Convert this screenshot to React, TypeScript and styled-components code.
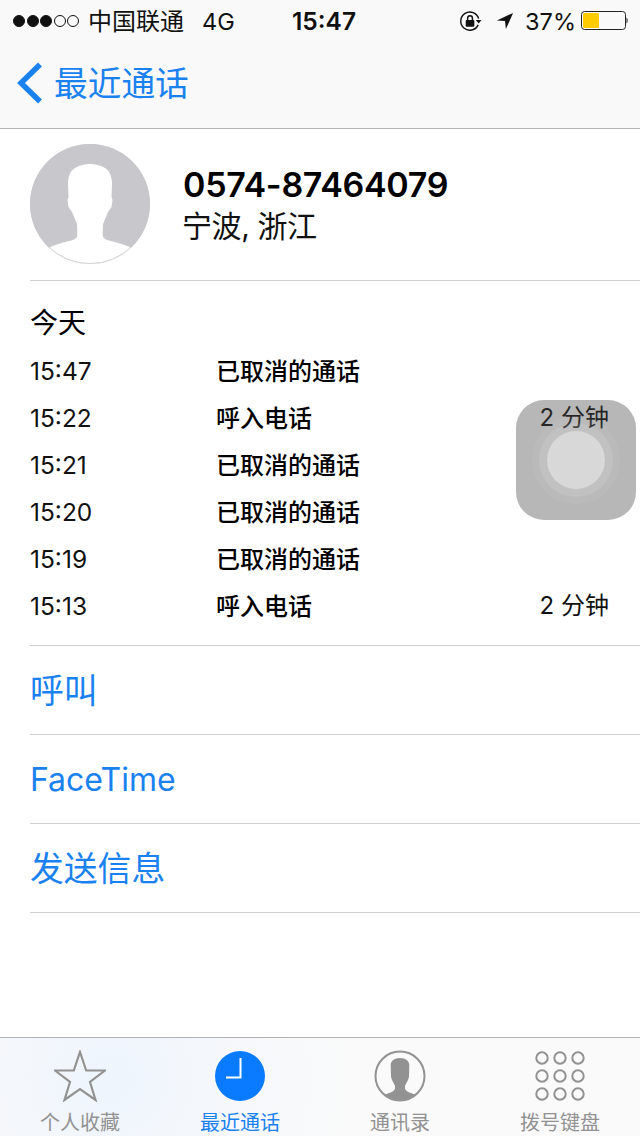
import React from "react";
import styled, { createGlobalStyle } from "styled-components";

const Global = createGlobalStyle`
  html, body { margin: 0; padding: 0; background: #fff; }
  body { font-family: Inter, "Noto Sans CJK SC", sans-serif; }
  * { box-sizing: border-box; }
`;
const Page = styled.div`
  position: relative; width: 640px; height: 1136px; overflow: hidden; display: flex; flex-direction: column; background: #fff; color: #000;
`;
const TopBar = styled.header`
  height: 129px; flex: none; background: #f9f9f9; border-bottom: 1px solid #b2b2b2; display: flex; flex-direction: column;
`;
const StatusBar = styled.div`
  height: 42px; flex: none; position: relative; display: flex; align-items: center; justify-content: space-between; padding: 0 12px 0 13px; font-size: 24px; color: #111;
`;
const StatusLeft = styled.div`display: flex; align-items: center; height: 100%;`;
const Dots = styled.div`display: flex; gap: 1.5px; margin-right: 9px;`;
const Dot = styled.span<{ $on: boolean }>`
  width: 12px; height: 12px; border-radius: 50%; border: 1px solid #111; background: ${p => (p.$on ? "#111" : "transparent")};
`;
const Carrier = styled.span`font-size: 24px; margin-right: 18px; padding-bottom: 3px;`;
const Net = styled.span`font-size: 23.5px;`;
const Clock = styled.span`
  position: absolute; left: 292px; top: 6px; font-size: 24.5px; font-weight: 600; line-height: 30px;
`;
const StatusRight = styled.div`display: flex; align-items: center;`;
const Percent = styled.span`font-size: 23.5px; margin: 0 5px 0 11px;`;
const NavBar = styled.nav`
  flex: 1; display: flex; align-items: center; padding: 0 0 7px 16px; color: #1a82f0; gap: 11px; font-size: 33.7px;
`;
const NavChevron = styled.svg`width: 27px; height: 42px; flex: none; margin-top: 3px;`;
const Profile = styled.section`
  height: 152px; flex: none; margin-left: 30px; border-bottom: 1px solid #cfcfd2; display: flex; align-items: center; padding-bottom: 15px; gap: 33px;
`;
const Avatar = styled.svg`width: 120px; height: 120px; flex: none; margin-top: 14px;`;
const ProfileText = styled.div`display: flex; flex-direction: column; margin-top: 16px;`;
const Phone = styled.div`font-size: 34px; line-height: 42px; font-weight: 600; letter-spacing: -0.3px;`;
const Region = styled.div`font-size: 30px; line-height: 40px; color: #111; letter-spacing: -0.4px; margin-left: -1px;`;
const History = styled.section`
  margin-left: 30px; border-bottom: 1px solid #cfcfd2; height: 365px; flex: none; padding: 22px 31px 0 0;
`;
const DayTitle = styled.div`font-size: 28px; line-height: 40px; margin-bottom: 5px;`;
const Row = styled.div`
  display: grid; grid-template-columns: 187px 1fr auto; height: 47px; align-items: center; font-size: 24px;
`;
const Time = styled.span`font-size: 24.5px; color: #111; padding-bottom: 2px;`;
const Kind = styled.span`font-weight: 500; color: #000; padding-bottom: 5px; margin-left: -1px;`;
const Duration = styled.span`color: #111; padding-bottom: 6px;`;
const Action = styled.div<{ $cjk?: boolean }>`
  margin-left: 30px; height: 89px; flex: none; border-bottom: 1px solid #cfcfd2; display: flex; align-items: center; color: #1a82f0;
  font-size: ${p => (p.$cjk ? "33.8px" : "32px")};
  padding-bottom: ${p => (p.$cjk ? "3px" : "0")};
`;
const Spacer = styled.div`flex: 1;`;
const TabBar = styled.footer`
  height: 99px; flex: none; border-top: 1px solid #b2b2b2; display: grid; grid-template-columns: repeat(4, 1fr);
  background: radial-gradient(circle at 110px 40px, #eef5fd 0, #f6f8fb 130px, #fafafa 260px);
`;
const Tab = styled.div<{ $active?: boolean }>`
  position: relative; display: flex; flex-direction: column; align-items: center; padding-top: 12px; color: ${p => (p.$active ? "#1a82f0" : "#929292")}; font-size: 20px;
`;
const TabIcon = styled.svg`width: 52px; height: 52px; flex: none;`;
const TabLabel = styled.span`line-height: 26px; margin-top: 8px; white-space: nowrap;`;
const Assistive = styled.div`
  position: absolute; left: 516px; top: 400px; width: 120px; height: 120px; border-radius: 28px; background: rgba(70,70,70,0.39);
  display: flex; align-items: center; justify-content: center;
`;
const RingOuter = styled.div`
  width: 88px; height: 88px; border-radius: 50%; background: rgba(255,255,255,0.05); display: flex; align-items: center; justify-content: center;
`;
const RingMid = styled.div`
  width: 74px; height: 74px; border-radius: 50%; background: rgba(255,255,255,0.1); display: flex; align-items: center; justify-content: center;
`;
const RingInner = styled.div`
  width: 58px; height: 58px; border-radius: 50%; background: #d8d8d8;
`;

const rows = [
  ["15:47", "已取消的通话", ""],
  ["15:22", "呼入电话", "2 分钟"],
  ["15:21", "已取消的通话", ""],
  ["15:20", "已取消的通话", ""],
  ["15:19", "已取消的通话", ""],
  ["15:13", "呼入电话", "2 分钟"],
];

const personPath =
  "M60 20 C55 20 50 21 45 24 C40 27 38 33 38 40 L38.5 53 L37.5 56 L38.5 63 L42 68 L44.5 74 L47 80 L47.3 91 C47 94 45 95 43 96 C35 98 27 100 18 104 L18 122 L102 122 L102 104 C93 100 85 98 77 96 C75 95 73 94 72.7 91 L73 80 L75.5 74 L78 68 L81.5 63 L82.5 56 L81.5 53 L82 40 C82 33 80 27 75 24 C70 21 65 20 60 20 Z";

export default function App() {
  return (
    <Page>
      <Global />
      <TopBar>
        <StatusBar>
          <StatusLeft>
            <Dots>
              {[1, 1, 1, 0, 0].map((d, i) => <Dot key={i} $on={!!d} />)}
            </Dots>
            <Carrier>中国联通</Carrier>
            <Net>4G</Net>
          </StatusLeft>
          <Clock>15:47</Clock>
          <StatusRight>
            <svg width="23" height="23" viewBox="0 0 24 24" fill="none" style={{ marginRight: 14 }}>
              <path d="M20 15.5A9.5 9.5 0 1 1 20.5 9" stroke="#111" strokeWidth="1.5" />
              <path d="M17.5 10.5h6l-3 3.5z" fill="#111" />
              <rect x="7" y="10.5" width="9" height="7" rx="1" fill="#111" />
              <path d="M9 11V8.5a2.5 2.5 0 0 1 5 0V11" stroke="#111" strokeWidth="1.5" />
            </svg>
            <svg width="18" height="18" viewBox="0 0 20 20">
              <path d="M19 1 L1 9.5 L10 10 L11 19 Z" fill="#111" />
            </svg>
            <Percent>37%</Percent>
            <svg width="47" height="20" viewBox="0 0 47 20" fill="none">
              <rect x="0.5" y="0.5" width="44" height="18" rx="3" stroke="#222" />
              <rect x="2" y="2" width="16" height="15" rx="1" fill="#fdcb00" />
              <path d="M45.5 6.5 C47 7 47 12 45.5 12.5 Z" fill="#222" />
            </svg>
          </StatusRight>
        </StatusBar>
        <NavBar>
          <NavChevron viewBox="0 0 27 42" fill="none">
            <path d="M24 2.5 L5 21 L24 39.5" stroke="#1a82f0" strokeWidth="5.5" />
          </NavChevron>
          <span>最近通话</span>
        </NavBar>
      </TopBar>

      <Profile>
        <Avatar viewBox="0 0 120 120">
          <defs>
            <clipPath id="avatar-clip"><circle cx="60" cy="60" r="60" /></clipPath>
          </defs>
          <g clipPath="url(#avatar-clip)">
            <rect width="120" height="120" fill="#c7c7cc" />
            <path d={personPath} fill="#fff" />
          </g>
          <circle cx="60" cy="60" r="59.6" fill="none" stroke="#c7c7cc" strokeWidth="0.8" />
        </Avatar>
        <ProfileText>
          <Phone>0574-87464079</Phone>
          <Region>宁波, 浙江</Region>
        </ProfileText>
      </Profile>

      <History>
        <DayTitle>今天</DayTitle>
        {rows.map((r, i) => (
          <Row key={i}>
            <Time>{r[0]}</Time>
            <Kind>{r[1]}</Kind>
            <Duration>{r[2]}</Duration>
          </Row>
        ))}
      </History>

      <Action $cjk>呼叫</Action>
      <Action>FaceTime</Action>
      <Action $cjk>发送信息</Action>
      <Spacer />

      <TabBar>
        <Tab>
          <TabIcon viewBox="0 0 52 52" fill="none">
            <path d="M26 2 L32.2 20.5 L51 20.5 L36 32 L41.5 50 L26 39 L10.5 50 L16 32 L1 20.5 L19.8 20.5 Z" stroke="#929292" strokeWidth="2.2" />
          </TabIcon>
          <TabLabel>个人收藏</TabLabel>
        </Tab>
        <Tab $active>
          <TabIcon viewBox="0 0 52 52">
            <circle cx="26" cy="26" r="25" fill="#0a7bff" />
            <path d="M26.5 8 V27.5 H12" fill="none" stroke="#fff" strokeWidth="2" />
          </TabIcon>
          <TabLabel>最近通话</TabLabel>
        </Tab>
        <Tab>
          <TabIcon viewBox="0 0 52 52" fill="none">
            <defs>
              <clipPath id="tab-person"><circle cx="26" cy="26" r="24" /></clipPath>
            </defs>
            <g clipPath="url(#tab-person)">
              <path d="M26 8 C20 8 17 11 16.7 15 L17 27 C18 31 20 33 21 36 L21 39 C20 41 18 42 14 43.5 C10 45 7 46 5 48 L10 52 L42 52 L47 48 C45 46 42 45 38 43.5 C34 42 32 41 31 39 L31 36 C32 33 34 31 35 27 L35.3 15 C35 11 32 8 26 8 Z" fill="#929292" />
            </g>
            <circle cx="26" cy="26" r="24.5" stroke="#929292" strokeWidth="2" />
          </TabIcon>
          <TabLabel>通讯录</TabLabel>
        </Tab>
        <Tab>
          <TabIcon viewBox="0 0 52 52" fill="none" stroke="#929292" strokeWidth="2">
            {[8, 26, 44].map(y =>
              [8, 26, 44].map(x => <circle key={`${x}-${y}`} cx={x} cy={y} r="5.7" />)
            )}
          </TabIcon>
          <TabLabel>拨号键盘</TabLabel>
        </Tab>
      </TabBar>

      <Assistive>
        <RingOuter>
          <RingMid>
            <RingInner />
          </RingMid>
        </RingOuter>
      </Assistive>
    </Page>
  );
}
